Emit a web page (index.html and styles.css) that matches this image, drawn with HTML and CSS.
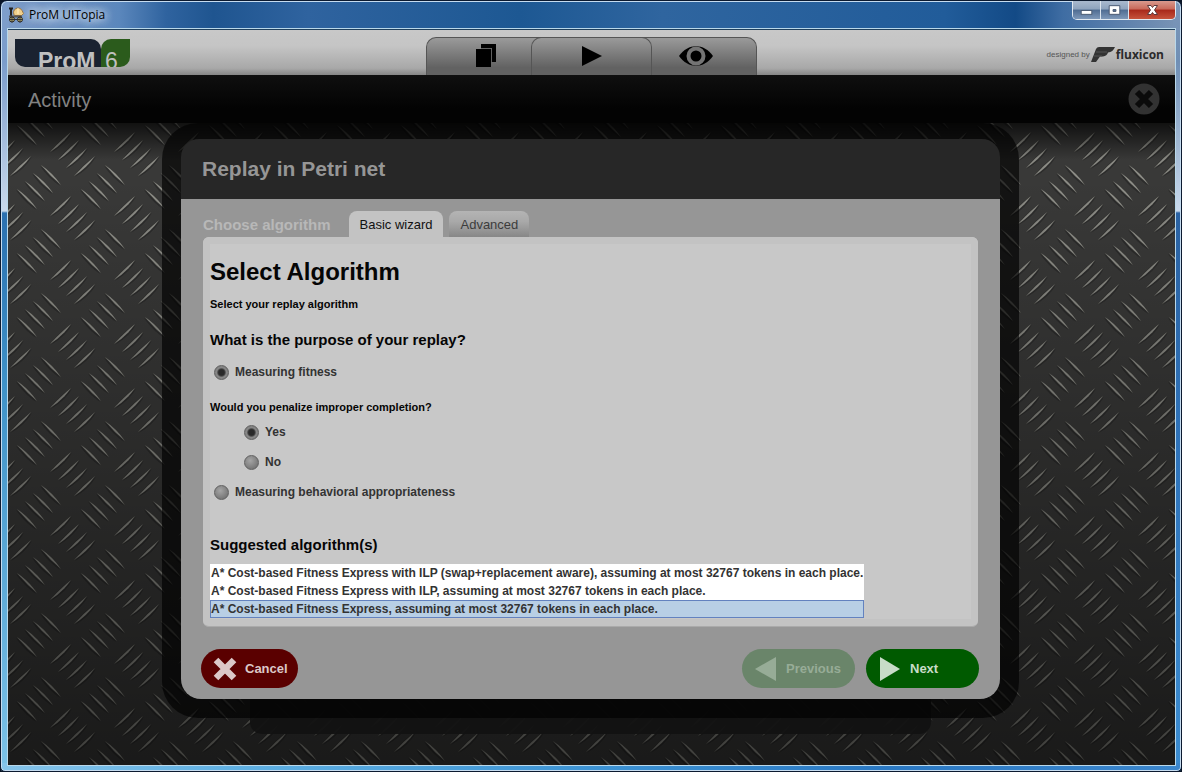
FILE: index.html
```html
<!DOCTYPE html>
<html lang="en">
<head>
<meta charset="utf-8">
<title>ProM UITopia</title>
<link rel="stylesheet" href="styles.css">
</head>
<body>
<div class="window">
  <header class="titlebar">
    <svg class="app-icon" viewBox="0 0 16 16" aria-hidden="true">
      <path d="M1 1.500h4M3 1v9" stroke="#222" stroke-width="2"/>
      <path d="M6 7.500a4 4 0 0 1 8-4l1.500 3-2 2H6.500z" fill="#f0cf8a" stroke="#9a7440"/>
      <path d="M10 1v6" stroke="#fff0c8"/>
      <path d="M1 9.500h13" stroke="#555" stroke-width="2"/>
      <circle cx="4" cy="12.500" r="2.500" fill="#cfc27a" stroke="#222"/>
      <circle cx="12" cy="12.500" r="2.500" fill="#cfc27a" stroke="#222"/>
      <path d="M4 9.500v6M1 12.500h14M12 9.500v6" stroke="#333"/>
    </svg>
    <span class="window-title">ProM UITopia</span>
    <div class="window-controls">
      <button class="wc" aria-label="Minimize"><svg viewBox="0 0 28 18"><rect x="8.500" y="9.500" width="11" height="4" fill="#fff" stroke="#4a5a72"/></svg></button>
      <button class="wc" aria-label="Maximize"><svg viewBox="0 0 28 18"><path d="M8.500 4.500h11v9h-11zM12.500 8.500h3v2h-3z" fill="#fff" stroke="#4a5a72" fill-rule="evenodd"/></svg></button>
      <button class="wc wc-close" aria-label="Close window"><svg viewBox="0 0 46 18"><path d="M18.500 4.500h3.500l1.500 2 1.500-2h3.500l-3 4.500 3 4.500h-3.500l-1.500-2-1.500 2h-3.500l3-4.500z" fill="#fff" stroke="#5c3a3c"/></svg></button>
    </div>
  </header>

  <div class="client">
    <svg class="plate" aria-hidden="true">
      <defs>
        <pattern id="tread" width="64" height="64" patternUnits="userSpaceOnUse" patternTransform="translate(-8 -30)">
          <rect width="64" height="64" fill="#393938"/>
          <g id="marks"></g>
        </pattern>
      </defs>
      <rect width="100%" height="100%" fill="url(#tread)"/>
    </svg>
    <div class="shade"></div>

    <div class="toolbar">
      <div class="logo"><span class="logo-prom">ProM</span><span class="logo-six">6</span></div>
      <nav class="views">
        <button class="view" aria-label="Workspace"><svg viewBox="0 0 34 34"><path d="M14 6h15v18h-4V10H14z"/><path d="M9 11h15v18H9z"/><path d="M14 10.500h10.500V24" fill="none" stroke="#606060"/></svg></button>
        <button class="view view-mid" aria-label="Actions"><svg viewBox="0 0 34 34"><path d="M7 8l20 10-20 10z"/></svg></button>
        <button class="view" aria-label="Views"><svg viewBox="0 0 34 34"><path d="M0 18C9 5 25 5 34 18 25 31 9 31 0 18z"/><circle cx="17" cy="18" r="7.500" fill="none" stroke="#747474" stroke-width="4"/></svg></button>
      </nav>
      <div class="credit">
        <span>designed by</span>
        <svg viewBox="0 0 24 17" aria-hidden="true"><path d="M5 3Q6 1 8 1H24Q22 6 17 6.500 16 10 12 10.500H9L5 16H0Z" fill="#333"/><path d="M5 6h11M3 10h8" stroke="#555"/></svg>
        <strong>fluxicon</strong>
      </div>
    </div>

    <div class="activity">
      <h1>Activity</h1>
      <button class="activity-close" aria-label="Close activity"><svg viewBox="0 0 32 32"><circle cx="16" cy="16" r="15.500" fill="#323232"/><path d="M9 9l14 14M23 9L9 23" stroke="#0b0b0b" stroke-width="6"/></svg></button>
    </div>

    <main class="stage">
      <section class="dialog">
        <h2 class="dialog-title">Replay in Petri net</h2>
        <div class="dialog-body">
          <div class="tabs">
            <span class="tabs-label">Choose algorithm</span>
            <button class="tab tab-on">Basic wizard</button>
            <button class="tab">Advanced</button>
          </div>
          <form class="panel">
            <h3>Select Algorithm</h3>
            <p class="hint">Select your replay algorithm</p>
            <h4>What is the purpose of your replay?</h4>
            <label class="choice"><input type="radio" name="purpose" checked>Measuring fitness</label>
            <p class="hint question">Would you penalize improper completion?</p>
            <label class="choice nested"><input type="radio" name="penalize" checked>Yes</label>
            <label class="choice nested"><input type="radio" name="penalize">No</label>
            <label class="choice"><input type="radio" name="purpose">Measuring behavioral appropriateness</label>
            <h4 class="suggest"><label for="algorithms">Suggested algorithm(s)</label></h4>
            <select id="algorithms" class="algorithms" size="3">
              <option>A* Cost-based Fitness Express with ILP (swap+replacement aware), assuming at most 32767 tokens in each place.</option>
              <option>A* Cost-based Fitness Express with ILP, assuming at most 32767 tokens in each place.</option>
              <option selected>A* Cost-based Fitness Express, assuming at most 32767 tokens in each place.</option>
            </select>
          </form>
          <div class="actions">
            <button class="pill cancel"><svg viewBox="0 0 24 24"><path d="M3 3l18 18M21 3L3 21" stroke="#dcc8c8" stroke-width="6.500"/></svg>Cancel</button>
            <button class="pill previous" disabled><svg viewBox="0 0 24 24"><path d="M22 0v24L1 12z" fill="#97ac97"/></svg>Previous</button>
            <button class="pill next"><svg viewBox="0 0 24 24"><path d="M2 0v24l20-12z" fill="#c8dcc8"/></svg>Next</button>
          </div>
        </div>
      </section>
    </main>
  </div>
</div>
<script src="plate.js"></script>
</body>
</html>
```

FILE: plate.js
```js
// Builds the raised marks of the tread plate; each mark is repeated around
// the tile so that it continues across the tile edges.
const ns = "http://www.w3.org/2000/svg";
const group = document.getElementById("marks");

function add(d, fill, opacity, x, y) {
  const path = document.createElementNS(ns, "path");
  path.setAttribute("d", d);
  path.setAttribute("fill", fill);
  path.setAttribute("opacity", opacity);
  path.setAttribute("transform", `translate(${x} ${y})`);
  group.appendChild(path);
}

const up = "M0 0Q8 -12 21 -20Q14 -8 0 0Z";
const upLight = "M0 0Q10 -11 21 -20Q13 -8 0 0Z";
const down = "M0 0Q13 7 20 20Q8 12 0 0Z";
const downLight = "M0 0Q12 8 20 20Q9 11 0 0Z";

for (let i = 0; i < 4; i++) {
  for (const dx of [-128, -64, 0, 64]) {
    for (const dy of [-192, -128, -64, 0]) {
      const ux = 50 + i * 8 + dx, uy = 152 + i * 8 + dy;
      const vx = 41 - i * 8 + dx, vy = 165 + i * 8 + dy;
      add(up, "#1e1e1d", 0.5, ux + 1, uy + 1);
      add(up, "#2c2c2a", 0.6, ux, uy);
      add(upLight, "#95958e", 0.9, ux, uy);
      add(down, "#1e1e1d", 0.5, vx - 1, vy + 1);
      add(down, "#2c2c2a", 0.6, vx, vy);
      add(downLight, "#95958e", 0.9, vx, vy);
    }
  }
}
```

FILE: styles.css
```css
* { box-sizing: border-box; }

body {
  margin: 0;
  background: #0a1526;
  font-family: "Liberation Sans", Arial, sans-serif;
}

button { border: 0; padding: 0; background: none; font: inherit; color: inherit; }
svg { display: block; }
h1, h2, h3, h4, p { margin: 0; }

.window {
  display: flex;
  flex-direction: column;
  min-height: 100vh;
  padding: 0 6px 6px 7px;
  border: 1px solid #0c1a30;
  border-radius: 7px 7px 5px 5px;
  box-shadow: inset 0 0 0 1px #c6dcf0;
  background:
    linear-gradient(90deg, #86c4ea, #5fb0e2 20%, #3d93d3 50%, #2a78c2 75%, #3b86cc) bottom / 100% 8px no-repeat,
    linear-gradient(#7f9fcb, #7a9ccb 60px, #c9d9ec 210px, #2b70b0 212px, #3f92c8 50%, #7cc2e8) left / 8px 100% no-repeat,
    linear-gradient(#7c96b8, #6f8fb5 60px, #c9d9ec 210px, #2a62a3 212px, #2f74bb 60%, #3b8cd0) right / 8px 100% no-repeat,
    linear-gradient(90deg, #7d9cc8, #5b87bc 10%, #2f639f 14%, #1f5590 18%, #2f639f 26%, #1d5893 44%, #2f659f 56%, #215c9a 80%, #134a86 86%, #3f6da3 90%, #7b95b6);
}

.titlebar { display: flex; height: 28px; align-items: flex-start; }
.app-icon { width: 16px; height: 16px; margin: 6px 5px 0 0; }
.window-title {
  padding: 4px 8px 0 0;
  font: 12px/20px "Open Sans", "Noto Sans", sans-serif;
  color: #000;
  text-shadow: 0 0 8px #dce8f5, 0 0 8px #dce8f5, 0 0 12px #dce8f5;
}
.window-controls {
  display: flex;
  margin: 0 -1px 0 auto;
  border: 1px solid #e0e8f0;
  border-top: 0;
  border-radius: 0 0 5px 5px;
  overflow: hidden;
}
.wc {
  width: 28px;
  height: 18px;
  border-right: 1px solid #dbe4ee;
  background: linear-gradient(#a9b9ce, #8ea3bd 45%, #4f6c92 50%, #7e98b9);
}
.wc svg { width: 100%; height: 100%; }
.wc-close { width: 46px; border: 0; background: linear-gradient(#d99a8e, #c9695a 45%, #a8281a 50%, #c6533c); }

.client {
  position: relative;
  display: flex;
  flex: 1;
  flex-direction: column;
  isolation: isolate;
  outline: 1px solid #b9d8ea;
  border-top: 1px solid #20405c;
}
.plate, .shade { position: absolute; inset: 0; width: 100%; height: 100%; z-index: -1; }
.shade { background: linear-gradient(transparent 20%, rgba(0, 0, 0, .55)), linear-gradient(rgba(0, 0, 0, .7) 93px, transparent 130px); }

.toolbar {
  display: grid;
  grid-template-columns: 1fr auto 1fr;
  height: 45px;
  padding: 0 11px 0 7px;
  background: linear-gradient(#c8c8c8, #c5c5c5 35%, #a8a8a8 85%, #868686);
}
.logo {
  display: flex;
  align-self: start;
  height: 28px;
  margin-top: 9px;
  color: #c0c0c0;
  font-size: 23px;
  line-height: 44px;
}
.logo span { height: 28px; overflow: hidden; }
.logo-prom { width: 86px; padding-left: 23px; border-radius: 0 10px 0 10px; background: #1a2230; font-weight: bold; }
.logo-six { width: 29px; padding-left: 4px; border-radius: 10px 0 10px 0; background: #2b5b1c; }

.views { display: flex; align-self: end; height: 38px; margin-left: 4px; }
.view {
  display: flex;
  width: 116px;
  justify-content: center;
  border: 1px solid #555;
  border-bottom: 0;
  background: linear-gradient(#9a9a9a, #626262 80%);
}
.view:first-child { margin-right: -11px; border-radius: 10px 0 0; border-right: 0; padding-right: 2px; }
.view:last-child { margin-left: -11px; border-radius: 0 10px 0 0; border-left: 0; padding-right: 5px; }
.view-mid { position: relative; width: 121px; border-radius: 10px 10px 0 0; }
.view svg { width: 34px; height: 34px; }

.credit {
  display: flex;
  justify-content: flex-end;
  align-items: center;
  padding-top: 4px;
  gap: 1px;
  font-size: 8px;
  color: #555;
}
.credit svg { width: 24px; height: 17px; }
.credit strong { font: bold 12px/16px "Open Sans", sans-serif; color: #2b2b2b; }

.activity {
  display: flex;
  justify-content: space-between;
  align-items: center;
  height: 48px;
  padding: 0 15px 0 20px;
  background: linear-gradient(#0f0f0f, #030303 70%);
}
.activity h1 { padding-top: 2px; font-size: 20px; font-weight: normal; line-height: 24px; color: #828282; }
.activity-close svg { width: 32px; height: 32px; }

.stage { display: flex; justify-content: center; padding: 0 156px 32px 154px; }
.dialog {
  position: relative;
  width: 100%;
  max-width: 858px;
  padding: 16px 19px 19px;
  border-radius: 36px;
  background: rgba(0, 0, 0, .65);
}
.dialog::before {
  content: "";
  position: absolute;
  z-index: -1;
  inset: 50% 88px -16px;
  border-radius: 12px;
  background: rgba(18, 18, 18, .95);
}
.dialog-title {
  padding: 16px 21px;
  border-radius: 18px 18px 0 0;
  background: #272727;
  color: #969696;
  font-size: 21px;
  line-height: 28px;
}
.dialog-body { padding: 12px 22px 11px; border-radius: 0 0 20px 20px; background: #969696; }

.tabs { display: flex; height: 26px; gap: 6px; line-height: 28px; }
.tabs-label { margin-right: 12px; font-size: 15px; font-weight: bold; color: #b8b8b8; }
.tab {
  padding: 0 11px;
  border-radius: 8px 8px 0 0;
  background: linear-gradient(#b4b4b4, #a9a9a9 40%, #878787);
  color: #3c3c3c;
  font-size: 13px;
}
.tab-on { background: #c3c3c3; color: #111; }

.panel {
  padding: 7px 7px 8px;
  border-radius: 6px;
  background: #c8c8c8;
  border-bottom: 1px solid #aaa;
  box-shadow: inset 0 0 0 7px #c3c3c3;
  color: #050505;
}
.panel h3 { padding-top: 13px; font-size: 24px; line-height: 30px; }
.panel h4 { font-size: 15px; line-height: 18px; }
.hint { padding: 9px 0 19px; font-size: 11px; line-height: 16px; font-weight: bold; }
.hint + h4 { margin-bottom: 8px; }
.question { padding: 12px 0 2px; }
.choice {
  display: flex;
  align-items: center;
  height: 30px;
  gap: 6px;
  padding-left: 4px;
  font-size: 12px;
  font-weight: bold;
  color: #333;
}
.nested { padding-left: 34px; }
.choice input {
  appearance: none;
  width: 15px;
  height: 15px;
  margin: 0;
  border: 1px solid #606060;
  border-radius: 50%;
  background: radial-gradient(circle at 40% 35%, #a5a5a5, #767676 75%);
}
.choice input:checked { background: radial-gradient(circle at 50% 50%, #2a2a2a 30%, #484848 40%, #888 52%, #777); }
.panel .suggest { margin: 29px 0 10px; }
.algorithms {
  display: block;
  max-width: 100%;
  height: 54px;
  padding: 0;
  border: 0;
  border-radius: 0;
  outline: 0;
  overflow: hidden;
  background: #fff;
  color: #333;
  font: bold 12px/16px "Liberation Sans", Arial, sans-serif;
}
.algorithms option {
  height: 18px;
  min-height: 18px;
  padding: 2px 1px 0;
  font: bold 12px/16px "Liberation Sans", Arial, sans-serif;
}
.algorithms option:checked {
  padding: 1px 0 0;
  border: 1px solid #6382bf;
  background: #b8cfe5 linear-gradient(#b8cfe5, #b8cfe5) !important;
  color: #333 !important;
}

.actions { display: flex; gap: 11px; margin: 22px -1px 0 -2px; }
.pill {
  display: flex;
  align-items: center;
  height: 39px;
  width: 113px;
  padding-left: 12px;
  gap: 8px;
  border-radius: 20px;
  font-size: 13px;
  font-weight: bold;
}
.pill svg { width: 24px; height: 24px; }
.cancel { width: 97px; margin-right: auto; background: #5a0000; color: #dcc8c8; }
.previous { background: #6a856a; color: #97ac97; }
.next { background: #005a00; color: #c8dcc8; }
```
